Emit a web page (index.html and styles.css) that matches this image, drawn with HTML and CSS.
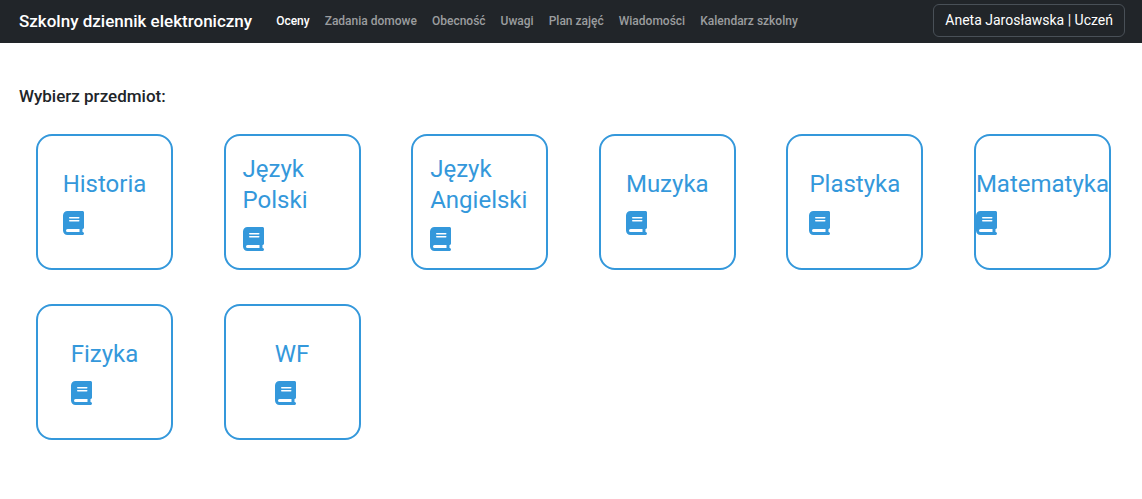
FILE: index.html
```html
<!DOCTYPE html>
<html lang="pl">
<head>
<meta charset="utf-8">
<meta name="viewport" content="width=device-width, initial-scale=1">
<title>Szkolny dziennik elektroniczny</title>
<link rel="stylesheet" href="styles.css">
</head>
<body>
<svg class="sprite" aria-hidden="true">
  <symbol id="book" viewBox="0 0 448 512"><path d="M448 352V32c0-17.700-14.300-32-32-32H96C43 0 0 43 0 96v320c0 53 43 96 96 96h320c17.700 0 32-14.300 32-32s-14.300-32-32-32v-64c17.700 0 32-14.300 32-32zM144 128h192a16 16 0 0 1 0 32H144a16 16 0 0 1 0-32zm0 64h192a16 16 0 0 1 0 32H144a16 16 0 0 1 0-32zM96 384h256v64H96a32 32 0 0 1 0-64z" fill-rule="evenodd"/></symbol>
</svg>
<header class="navbar">
  <a class="brand" href="#">Szkolny dziennik elektroniczny</a>
  <nav class="menu">
    <a class="menu-link active" href="#">Oceny</a>
    <a class="menu-link" href="#">Zadania domowe</a>
    <a class="menu-link" href="#">Obecność</a>
    <a class="menu-link" href="#">Uwagi</a>
    <a class="menu-link" href="#">Plan zajęć</a>
    <a class="menu-link" href="#">Wiadomości</a>
    <a class="menu-link" href="#">Kalendarz szkolny</a>
  </nav>
  <button class="account" type="button">Aneta Jarosławska | Uczeń</button>
</header>
<main class="content">
  <h1 class="title">Wybierz przedmiot:</h1>
  <div class="subjects">
    <a class="subject" href="#"><span class="label">Historia<svg class="icon" aria-hidden="true"><use href="#book"/></svg></span></a>
    <a class="subject" href="#"><span class="label">Język Polski<svg class="icon" aria-hidden="true"><use href="#book"/></svg></span></a>
    <a class="subject" href="#"><span class="label">Język Angielski<svg class="icon" aria-hidden="true"><use href="#book"/></svg></span></a>
    <a class="subject" href="#"><span class="label">Muzyka<svg class="icon" aria-hidden="true"><use href="#book"/></svg></span></a>
    <a class="subject" href="#"><span class="label">Plastyka<svg class="icon" aria-hidden="true"><use href="#book"/></svg></span></a>
    <a class="subject" href="#"><span class="label">Matematyka<svg class="icon" aria-hidden="true"><use href="#book"/></svg></span></a>
    <a class="subject" href="#"><span class="label">Fizyka<svg class="icon" aria-hidden="true"><use href="#book"/></svg></span></a>
    <a class="subject" href="#"><span class="label">WF<svg class="icon" aria-hidden="true"><use href="#book"/></svg></span></a>
  </div>
</main>
</body>
</html>
```
FILE: styles.css
```css
* {
  box-sizing: border-box;
}

body {
  margin: 0;
  background: #fff;
  color: #212529;
  font-family: Roboto, "Liberation Sans", sans-serif;
}

.sprite {
  display: none;
}

.navbar {
  display: flex;
  align-items: center;
  padding: 4px 17px 6px 19px;
  background: #212529;
}

.brand {
  margin-right: 24px;
  color: #fff;
  font-size: 17px;
  font-weight: 500;
  line-height: 24px;
  text-decoration: none;
}

.menu {
  display: flex;
  gap: 15px;
}

.menu-link {
  color: #9b9d9f;
  font-size: 12px;
  font-weight: 500;
  line-height: 20px;
  text-decoration: none;
}

.menu-link.active {
  color: #fff;
}

.account {
  margin-left: auto;
  padding: 5px 11px;
  border: 1px solid #495057;
  border-radius: 6px;
  background: transparent;
  color: #fff;
  font: 14px/21px Roboto, "Liberation Sans", sans-serif;
}

.content {
  padding: 43px 31px 34px 19px;
}

.title {
  margin: 0 0 27px;
  font-size: 17px;
  font-weight: 500;
  line-height: 21px;
}

.subjects {
  display: grid;
  grid-template-columns: repeat(auto-fill, 137px);
  justify-content: space-between;
  gap: 34px;
  padding-left: 17px;
}

.subject {
  display: flex;
  align-items: center;
  justify-content: center;
  height: 136px;
  padding: 0 17px;
  border: 2px solid #3498db;
  border-radius: 16px;
  color: #3498db;
  font-size: 24px;
  line-height: 31px;
  text-decoration: none;
}

.icon {
  display: block;
  width: 21px;
  height: 24px;
  margin-top: 11px;
  fill: currentColor;
}
```
